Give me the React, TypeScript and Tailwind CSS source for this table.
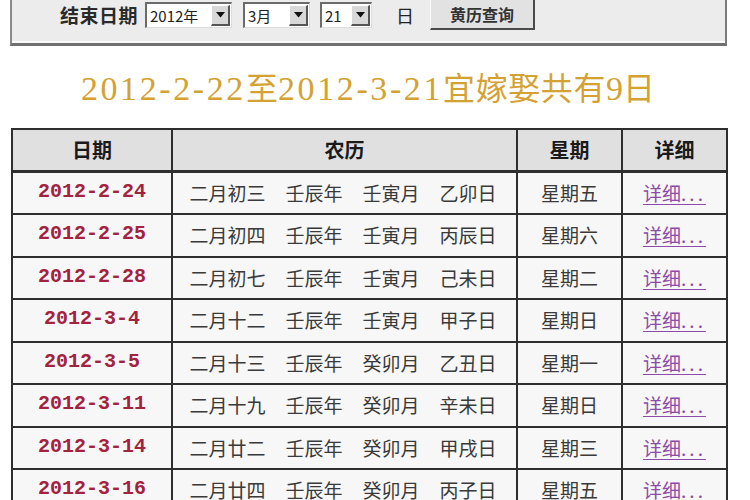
import React from "react";

const rows = [
  { d: "2012-2-24", l: ["二月初三", "壬辰年", "壬寅月", "乙卯日"], w: "星期五" },
  { d: "2012-2-25", l: ["二月初四", "壬辰年", "壬寅月", "丙辰日"], w: "星期六" },
  { d: "2012-2-28", l: ["二月初七", "壬辰年", "壬寅月", "己未日"], w: "星期二" },
  { d: "2012-3-4", l: ["二月十二", "壬辰年", "壬寅月", "甲子日"], w: "星期日" },
  { d: "2012-3-5", l: ["二月十三", "壬辰年", "癸卯月", "乙丑日"], w: "星期一" },
  { d: "2012-3-11", l: ["二月十九", "壬辰年", "癸卯月", "辛未日"], w: "星期日" },
  { d: "2012-3-14", l: ["二月廿二", "壬辰年", "癸卯月", "甲戌日"], w: "星期三" },
  { d: "2012-3-16", l: ["二月廿四", "壬辰年", "癸卯月", "丙子日"], w: "星期五" },
];

const cjk = { fontFamily: '"Noto Sans CJK SC", "Noto Sans", sans-serif' };

function Select({ text, width }: { text: string; width: number }) {
  return (
    <div
      className="flex items-center h-[26px] bg-white border-t-2 border-l-2 border-t-[#6b6b6b] border-l-[#6b6b6b] border-b border-r border-b-[#dcdcdc] border-r-[#dcdcdc]"
      style={{ width }}
    >
      <span className="flex-1 pl-[3px] text-[15px] leading-none text-[#222]" style={cjk}>
        {text}
      </span>
      <span className="mr-[1px] flex h-[21px] w-[19px] items-center justify-center bg-[#d8d8d8] border-t border-l border-t-white border-l-white border-b-2 border-r-2 border-b-[#555] border-r-[#555]">
        <svg width="9" height="6" viewBox="0 0 9 6">
          <path d="M0 0 L9 0 L4.5 5.5 Z" fill="#111" />
        </svg>
      </span>
    </div>
  );
}

export default function App() {
  return (
    <div className="w-[750px] h-[500px] overflow-hidden bg-white" style={cjk}>
      {/* top panel */}
      <div className="ml-[10px] w-[717px] h-[46px] bg-[#ececec] border-l-2 border-r-2 border-b-[3px] border-l-[#8a8a8a] border-r-[#7a7a7a] border-b-[#707070] shadow-[inset_0_-2px_0_#fafafa]">
        <div className="flex items-start pl-[48px] pt-[2px]">
          <span className="mt-[3px] text-[19px] leading-none font-bold text-[#2a2a2a] tracking-[0.5px]">结束日期</span>
          <div className="ml-[7px]">
            <Select text="2012年" width={87} />
          </div>
          <div className="ml-[11px]">
            <Select text="3月" width={67} />
          </div>
          <div className="ml-[10px]">
            <Select text="21" width={52} />
          </div>
          <span className="ml-[24px] mt-[4px] text-[18px] leading-none text-[#222]">日</span>
          <div className="ml-[16px] mt-[-4px] flex h-[32px] w-[105px] items-center justify-center bg-[#e2e2e2] border-t border-l border-t-[#fafafa] border-l-[#fafafa] border-b-2 border-r-2 border-b-[#4a4a4a] border-r-[#4a4a4a]">
            <span className="text-[16px] leading-none font-bold text-[#333]">黄历查询</span>
          </div>
        </div>
      </div>

      {/* title */}
      <div className="h-[82px] flex items-center justify-center pr-[14px] text-[#d4a232]">
        <div className="flex items-baseline pt-[2px]">
          <span className="text-[34px] tracking-[2.6px]" style={{ fontFamily: '"Liberation Serif", serif' }}>2012-2-22</span>
          <span className="text-[32px]">至</span>
          <span className="text-[34px] tracking-[2.6px]" style={{ fontFamily: '"Liberation Serif", serif' }}>2012-3-21</span>
          <span className="text-[32px] tracking-[0.6px]">宜嫁娶共有</span>
          <span className="text-[34px]" style={{ fontFamily: '"Liberation Serif", serif' }}>9</span>
          <span className="text-[32px]">日</span>
        </div>
      </div>

      {/* table */}
      <div className="ml-[11px] w-[717px] bg-[#2e2e2e] p-[2px] grid grid-cols-[158px_343px_103px_103px] gap-[2px] auto-rows-[40.5px]">
        {["日期", "农历", "星期", "详细"].map((h) => (
          <div key={h} className="h-[40px] bg-[#e0e0e0] flex items-center justify-center text-[20px] font-bold text-[#1a1a1a]">
            {h}
          </div>
        ))}
        {rows.map((r) => (
          <React.Fragment key={r.d}>
            <div className="bg-[#f7f7f7] flex items-center justify-center pb-[2px]">
              <span
                className="text-[20px] font-bold text-[#a3223d]"
                style={{ fontFamily: '"Liberation Mono", monospace' }}
              >
                {r.d}
              </span>
            </div>
            <div className="bg-[#f7f7f7] flex items-center justify-center gap-[20px] pr-[3px] text-[19px] text-[#3a3a3a]">
              {r.l.map((t, i) => (
                <span key={i}>{t}</span>
              ))}
            </div>
            <div className="bg-[#f7f7f7] flex items-center justify-center text-[19px] text-[#3a3a3a]">
              {r.w}
            </div>
            <div className="bg-[#f7f7f7] flex items-center justify-center">
              <span className="text-[19px] text-[#8e4aa8] underline decoration-[#8e4aa8] underline-offset-[3px]">
                详细<span className="tracking-[3px]">...</span>
              </span>
            </div>
          </React.Fragment>
        ))}
      </div>
    </div>
  );
}
